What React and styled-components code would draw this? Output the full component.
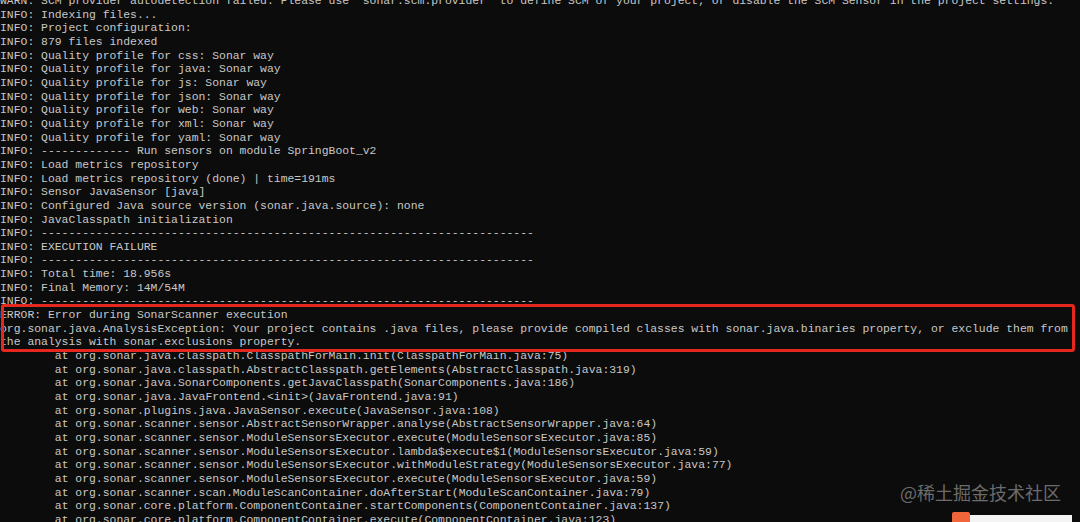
import React from 'react';
import styled, { createGlobalStyle } from 'styled-components';

const GlobalStyle = createGlobalStyle`
  html, body {
    margin: 0;
    padding: 0;
    background: #0c0c0c;
  }
`;

const Screen = styled.div`
  position: relative;
  width: 1080px;
  height: 522px;
  overflow: hidden;
  background: #0c0c0c;
`;

const Console = styled.div`
  display: flex;
  flex-direction: column;
  margin-top: -6px;
  font-family: "Liberation Mono", "DejaVu Sans Mono", monospace;
  font-size: 11.42px;
  line-height: 13.65px;
  color: #c8c8c8;
`;

const Line = styled.div`
  white-space: pre;
  padding-left: ${(p) => (p.$indent ? '54.8px' : '0')};
`;

const Highlight = styled.div`
  position: absolute;
  left: 1px;
  top: 304px;
  width: 1068px;
  height: 42px;
  border: 3px solid #e5271f;
  border-radius: 3px;
`;

const Watermark = styled.div`
  position: absolute;
  right: 19px;
  top: 480px;
  font-family: "Noto Sans CJK SC", "Noto Sans", sans-serif;
  font-size: 18px;
  line-height: 24px;
  color: #6b6b6b;
`;

const FloatBar = styled.div`
  position: absolute;
  left: 952px;
  top: 512px;
  width: 120px;
  height: 10px;
  display: flex;
  align-items: flex-end;
`;

const FloatTab = styled.div`
  flex: 0 0 18px;
  height: 10px;
  background: #f0663a;
  border-radius: 2px 2px 0 0;
`;

const FloatPanel = styled.div`
  flex: 0 0 102px;
  height: 7px;
  background: #f4f4f4;
`;

const header = [
  'WARN: SCM provider autodetection failed. Please use "sonar.scm.provider" to define SCM of your project, or disable the SCM Sensor in the project settings.',
  'INFO: Indexing files...',
  'INFO: Project configuration:',
  'INFO: 879 files indexed',
  'INFO: Quality profile for css: Sonar way',
  'INFO: Quality profile for java: Sonar way',
  'INFO: Quality profile for js: Sonar way',
  'INFO: Quality profile for json: Sonar way',
  'INFO: Quality profile for web: Sonar way',
  'INFO: Quality profile for xml: Sonar way',
  'INFO: Quality profile for yaml: Sonar way',
  'INFO: ------------- Run sensors on module SpringBoot_v2',
  'INFO: Load metrics repository',
  'INFO: Load metrics repository (done) | time=191ms',
  'INFO: Sensor JavaSensor [java]',
  'INFO: Configured Java source version (sonar.java.source): none',
  'INFO: JavaClasspath initialization',
  'INFO: ------------------------------------------------------------------------',
  'INFO: EXECUTION FAILURE',
  'INFO: ------------------------------------------------------------------------',
  'INFO: Total time: 18.956s',
  'INFO: Final Memory: 14M/54M',
  'INFO: ------------------------------------------------------------------------',
  'ERROR: Error during SonarScanner execution',
  'org.sonar.java.AnalysisException: Your project contains .java files, please provide compiled classes with sonar.java.binaries property, or exclude them from',
  'the analysis with sonar.exclusions property.',
];

const stack = [
  'at org.sonar.java.classpath.ClasspathForMain.init(ClasspathForMain.java:75)',
  'at org.sonar.java.classpath.AbstractClasspath.getElements(AbstractClasspath.java:319)',
  'at org.sonar.java.SonarComponents.getJavaClasspath(SonarComponents.java:186)',
  'at org.sonar.java.JavaFrontend.<init>(JavaFrontend.java:91)',
  'at org.sonar.plugins.java.JavaSensor.execute(JavaSensor.java:108)',
  'at org.sonar.scanner.sensor.AbstractSensorWrapper.analyse(AbstractSensorWrapper.java:64)',
  'at org.sonar.scanner.sensor.ModuleSensorsExecutor.execute(ModuleSensorsExecutor.java:85)',
  'at org.sonar.scanner.sensor.ModuleSensorsExecutor.lambda$execute$1(ModuleSensorsExecutor.java:59)',
  'at org.sonar.scanner.sensor.ModuleSensorsExecutor.withModuleStrategy(ModuleSensorsExecutor.java:77)',
  'at org.sonar.scanner.sensor.ModuleSensorsExecutor.execute(ModuleSensorsExecutor.java:59)',
  'at org.sonar.scanner.scan.ModuleScanContainer.doAfterStart(ModuleScanContainer.java:79)',
  'at org.sonar.core.platform.ComponentContainer.startComponents(ComponentContainer.java:137)',
  'at org.sonar.core.platform.ComponentContainer.execute(ComponentContainer.java:123)',
];

export default function App() {
  return (
    <>
      <GlobalStyle />
      <Screen>
        <Console>
          {header.map((text, i) => (
            <Line key={'h' + i}>{text}</Line>
          ))}
          {stack.map((text, i) => (
            <Line key={'s' + i} $indent>{text}</Line>
          ))}
        </Console>
        <Highlight />
        <Watermark>@稀土掘金技术社区</Watermark>
        <FloatBar>
          <FloatTab />
          <FloatPanel />
        </FloatBar>
      </Screen>
    </>
  );
}
